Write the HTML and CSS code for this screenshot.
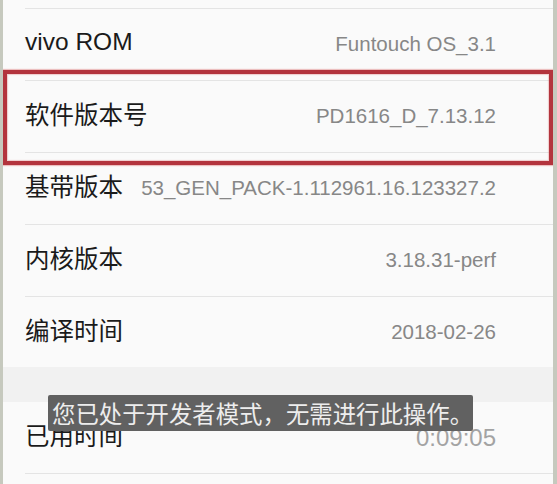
FILE: index.html
```html
<!DOCTYPE html>
<html lang="zh">
<head>
<meta charset="utf-8">
<link rel="stylesheet" href="styles.css">
</head>
<body>
<div class="screen">
  <div class="stub"></div>
  <div class="row"><span class="label latin">vivo ROM</span><span class="value">Funtouch OS_3.1</span></div>
  <div class="row"><span class="label">软件版本号</span><span class="value">PD1616_D_7.13.12</span></div>
  <div class="row"><span class="label">基带版本</span><span class="value">53_GEN_PACK-1.112961.16.123327.2</span></div>
  <div class="row"><span class="label">内核版本</span><span class="value">3.18.31-perf</span></div>
  <div class="row last"><span class="label">编译时间</span><span class="value">2018-02-26</span></div>
  <div class="gap"></div>
  <div class="row"><span class="label">已用时间</span><span class="value big">0:09:05</span></div>
  <div class="highlight"></div>
  <div class="toast">您已处于开发者模式，无需进行此操作。</div>
</div>
</body>
</html>
```

FILE: styles.css
```css
html, body {
  margin: 0;
  padding: 0;
}
body {
  width: 557px;
  height: 484px;
  overflow: hidden;
  background: #c6c9be;
}
.screen {
  position: relative;
  margin: 0 4px 0 3px;
  height: 484px;
  background: #fafafa;
  overflow: hidden;
}
.stub {
  height: 8px;
  margin-left: 22px;
  border-bottom: 1px solid #e4e4e4;
}
.row {
  height: 71px;
  margin-left: 22px;
  padding-right: 57px;
  border-bottom: 1px solid #e4e4e4;
  display: flex;
  align-items: center;
  justify-content: space-between;
}
.row.last {
  border-bottom: none;
  height: 70px;
}
.gap {
  height: 35px;
  background: #f1f1f1;
}
.label {
  font-family: "Noto Sans CJK SC", "Liberation Sans", sans-serif;
  font-size: 24.5px;
  color: #1a1a1a;
  line-height: 1;
  margin-top: -4px;
}
.label.latin {
  font-family: "Liberation Sans", "Noto Sans CJK SC", sans-serif;
}
.value {
  font-family: "Liberation Sans", Arial, sans-serif;
  font-size: 20.5px;
  color: #878787;
  line-height: 1;
}
.value.big {
  font-size: 24px;
  color: #a3a3a3;
}
.highlight {
  position: absolute;
  left: 0;
  top: 70px;
  width: 550px;
  height: 95px;
  box-sizing: border-box;
  border: 4px solid #b3343d;
  box-shadow: 0 0 1px 1px rgba(220, 120, 120, 0.45), inset 0 0 1px 1px rgba(220, 120, 120, 0.35);
}
.toast {
  position: absolute;
  left: 45px;
  top: 395px;
  width: 425px;
  height: 36px;
  box-sizing: border-box;
  padding-left: 4px;
  background: #616161;
  border-radius: 2px;
  color: #ededed;
  font-family: "Noto Sans CJK SC", sans-serif;
  font-size: 23.4px;
  line-height: 36px;
  text-align: left;
  white-space: nowrap;
}
```
